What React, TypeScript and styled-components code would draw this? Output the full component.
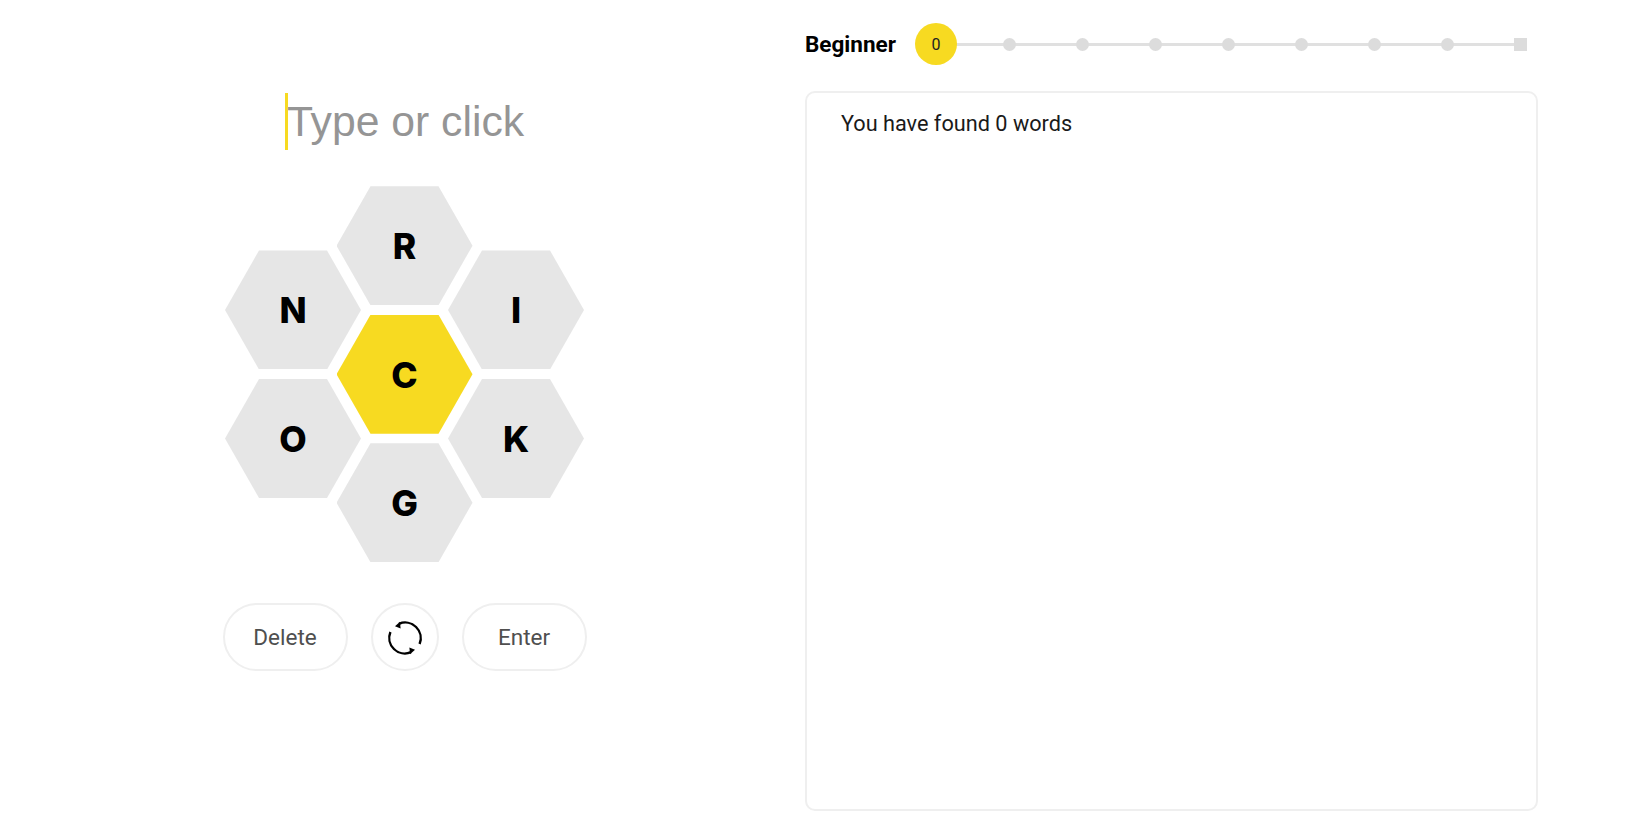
import styled, { createGlobalStyle } from 'styled-components';

const GlobalStyle = createGlobalStyle`
  html, body {
    margin: 0;
    padding: 0;
    background: #fff;
  }
  body {
    font-family: "Liberation Sans", Arial, sans-serif;
    color: #000;
  }
`;

const Page = styled.div`
  display: flex;
  width: 1650px;
  height: 825px;
  box-sizing: border-box;
  overflow: hidden;
`;

// left side, the game
const GameColumn = styled.div`
  flex: 0 0 806px;
  box-sizing: border-box;
  padding: 93px 0 0 3px;
  display: flex;
  flex-direction: column;
  align-items: center;
`;

const InputRow = styled.div`
  display: flex;
  height: 57px;
  align-items: center;
`;

const Caret = styled.span`
  width: 3px;
  height: 57px;
  background: #f7da21;
`;

const Placeholder = styled.span`
  margin-left: -1px;
  font-size: 42.7px;
  line-height: 57px;
  color: #959595;
  white-space: nowrap;
`;

const Hive = styled.div`
  display: flex;
  align-items: center;
  margin-top: 36.2px;
`;

const HiveColumn = styled.div`
  display: flex;
  flex-direction: column;
  gap: 9.5px;
  & + & {
    margin-left: -24.5px;
  }
`;

const Cell = styled.div<{ $center?: boolean }>`
  width: 136px;
  height: 119px;
  box-sizing: border-box;
  padding-top: 2px;
  display: flex;
  align-items: center;
  justify-content: center;
  clip-path: polygon(25% 0, 75% 0, 100% 50%, 75% 100%, 25% 100%, 0 50%);
  background: ${(p) => (p.$center ? '#f7da21' : '#e6e6e6')};
  font-family: "Inter", sans-serif;
  font-size: 35.5px;
  font-weight: 800;
  color: #000;
`;

const Controls = styled.div`
  display: flex;
  gap: 23px;
  margin-top: 41px;
`;

const Pill = styled.button<{ $round?: boolean }>`
  width: ${(p) => (p.$round ? '68px' : '125px')};
  height: 68px;
  box-sizing: border-box;
  padding: ${(p) => (p.$round ? '1px 0 0' : '0 0 1px')};
  display: flex;
  align-items: center;
  justify-content: center;
  background: #fff;
  border: 2px solid #efefef;
  border-radius: 34px;
  font-family: "Roboto", sans-serif;
  font-size: 22.5px;
  color: #4f4f4f;
`;

// right side, rank and word list
const ResultColumn = styled.div`
  flex: 0 0 733px;
  margin-left: -1px;
  padding-top: 23px;
  display: flex;
  flex-direction: column;
`;

const RankRow = styled.div`
  display: flex;
  align-items: center;
  height: 42px;
`;

const RankName = styled.div`
  width: 94.5px;
  font-family: "Roboto", sans-serif;
  font-size: 22.5px;
  font-weight: 700;
`;

const RankTrack = styled.div`
  position: relative;
  display: grid;
  grid-template-columns: repeat(9, 73px);
  align-items: center;
  justify-items: center;
  &::before {
    content: '';
    position: absolute;
    left: 36.5px;
    right: 36.5px;
    top: 50%;
    height: 3px;
    margin-top: -1.5px;
    background: #e0e0e0;
  }
`;

const RankNow = styled.div`
  position: relative;
  width: 42px;
  height: 42px;
  border-radius: 50%;
  background: #f7da21;
  display: flex;
  align-items: center;
  justify-content: center;
  font-family: "Roboto", sans-serif;
  font-size: 16px;
  color: #222;
`;

const RankDot = styled.div<{ $last?: boolean }>`
  position: relative;
  width: 13px;
  height: 13px;
  border-radius: ${(p) => (p.$last ? '0' : '50%')};
  background: #dcdcdc;
`;

const WordPanel = styled.div`
  width: 733px;
  height: 720px;
  margin-top: 26px;
  box-sizing: border-box;
  border: 2px solid #efefef;
  border-radius: 10px;
  padding: 17px 34px;
`;

const FoundText = styled.div`
  font-family: "Roboto", sans-serif;
  font-size: 21.7px;
  line-height: 28px;
  color: #1a1a1a;
`;

const ShuffleIcon = () => (
  <svg width="36" height="36" viewBox="0 0 36 36" fill="none">
    <path d="M32.6 24A15.6 15.6 0 0 0 12 3.8" stroke="#000" strokeWidth="2.4" />
    <path d="M8 6.2L13 1.8L13.6 8.4Z" fill="#000" />
    <path d="M3.4 12A15.6 15.6 0 0 0 24 32.2" stroke="#000" strokeWidth="2.4" />
    <path d="M28 29.8L23 34.2L22.4 27.6Z" fill="#000" />
  </svg>
);

const App = () => {
  return (
    <Page>
      <GlobalStyle />
      <GameColumn>
        <InputRow>
          <Caret />
          <Placeholder>Type or click</Placeholder>
        </InputRow>
        <Hive>
          <HiveColumn>
            <Cell>N</Cell>
            <Cell>O</Cell>
          </HiveColumn>
          <HiveColumn>
            <Cell>R</Cell>
            <Cell $center>C</Cell>
            <Cell>G</Cell>
          </HiveColumn>
          <HiveColumn>
            <Cell>I</Cell>
            <Cell>K</Cell>
          </HiveColumn>
        </Hive>
        <Controls>
          <Pill>Delete</Pill>
          <Pill $round aria-label="Shuffle">
            <ShuffleIcon />
          </Pill>
          <Pill>Enter</Pill>
        </Controls>
      </GameColumn>
      <ResultColumn>
        <RankRow>
          <RankName>Beginner</RankName>
          <RankTrack>
            <RankNow>0</RankNow>
            {[1, 2, 3, 4, 5, 6, 7].map((n) => (
              <RankDot key={n} />
            ))}
            <RankDot $last />
          </RankTrack>
        </RankRow>
        <WordPanel>
          <FoundText>You have found 0 words</FoundText>
        </WordPanel>
      </ResultColumn>
    </Page>
  );
};

export default App;
